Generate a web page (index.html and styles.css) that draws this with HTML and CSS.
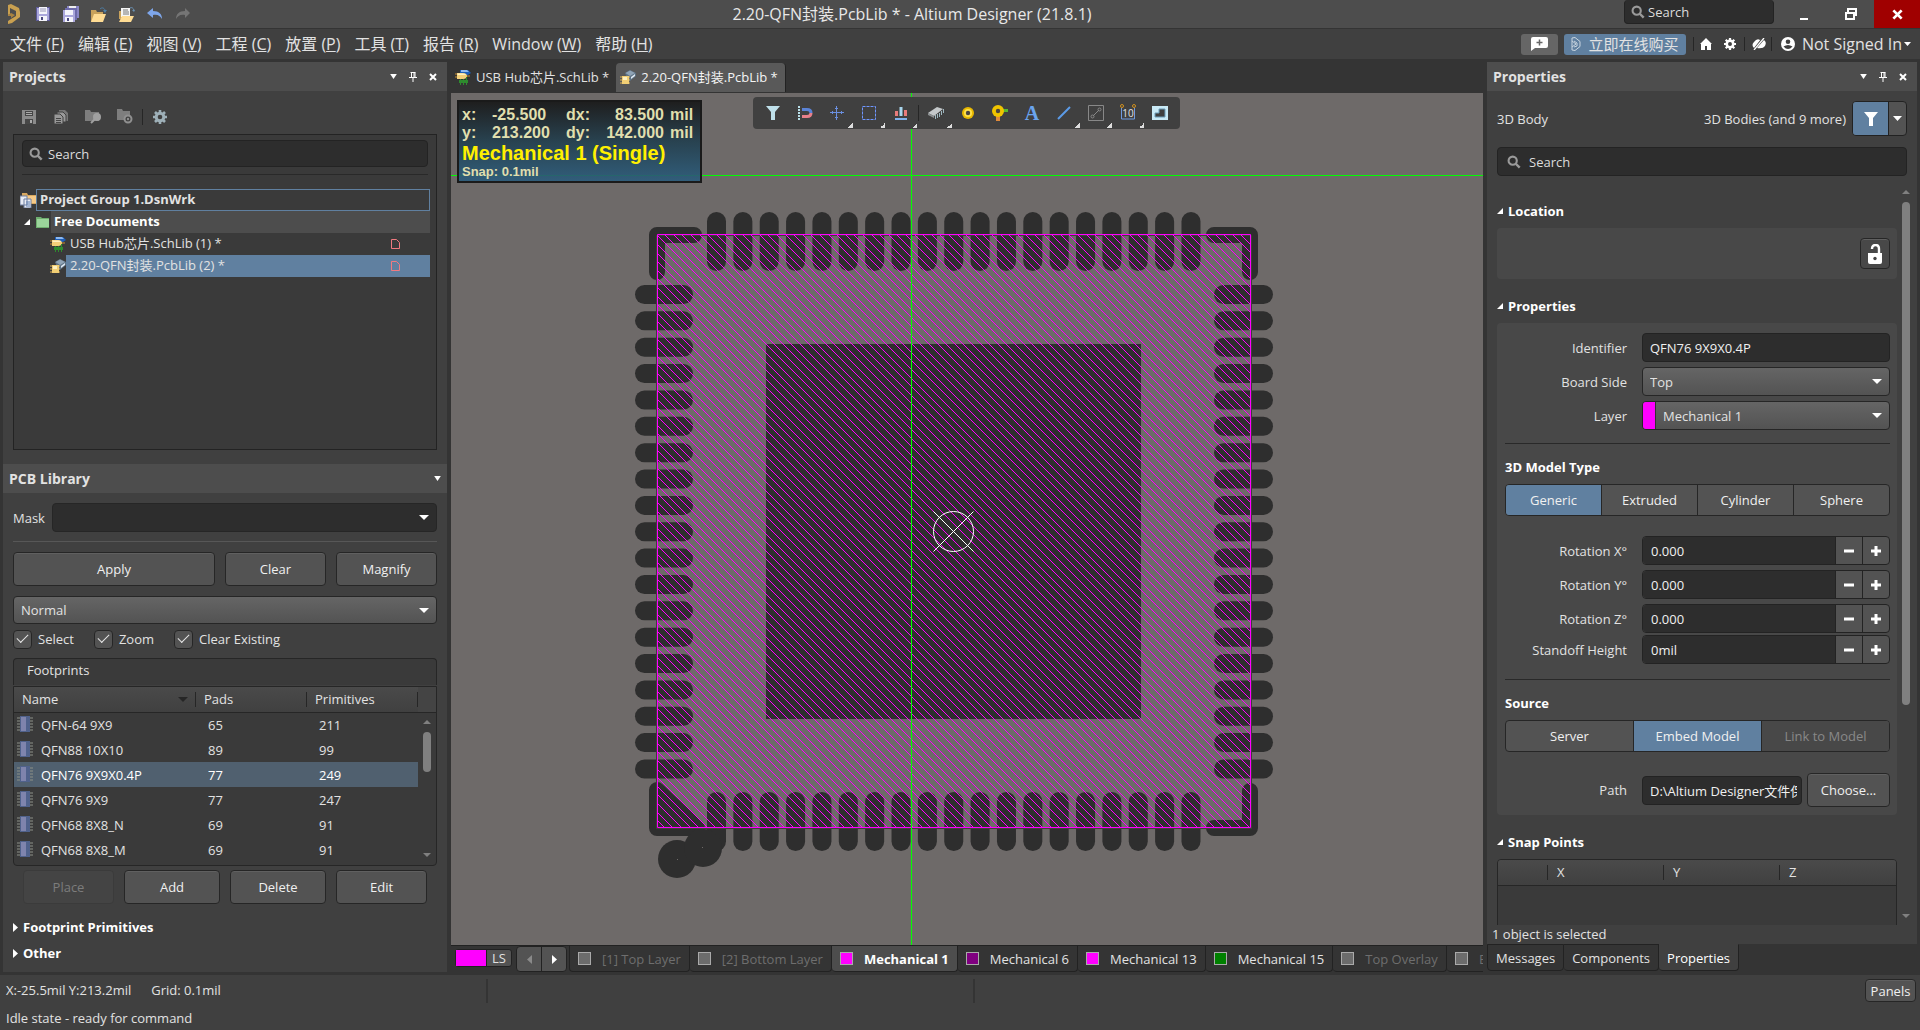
FILE: index.html
```html
<!DOCTYPE html>
<html lang="zh-CN">
<head>
<meta charset="utf-8">
<title>2.20-QFN封装.PcbLib * - Altium Designer (21.8.1)</title>
<link rel="stylesheet" href="styles.css">
</head>
<body>
<svg class="defs" aria-hidden="true">
  <symbol id="i-search" viewBox="0 0 16 16"><circle cx="6.5" cy="6.5" r="4.7" fill="none" stroke="#9a9a9a" stroke-width="2.4"/><path d="M10 10l4.5 4.5" stroke="#9a9a9a" stroke-width="2.8"/></symbol>
  <symbol id="i-down" viewBox="0 0 8 6"><path d="M0 0h8L4 6z" fill="#fff"/></symbol>
  <symbol id="i-pin" viewBox="0 0 8 10"><path d="M1.5.5h5M2.5.5v5M5 .5v5M6 .5v5M0 5.5h8M4 6v4" stroke="#fff" fill="none"/></symbol>
  <symbol id="i-close" viewBox="0 0 8 8"><path d="M1 1l6 6M7 1L1 7" stroke="#fff" stroke-width="2"/></symbol>
  <symbol id="i-sch" viewBox="0 0 16 16"><path d="M5 1h8l3 3-3 2H5z" fill="#1f5fb8"/><path d="M6 1h6l2 2H6z" fill="#8db8ee"/><path d="M0 5h3M0 8h3M11 7h4" stroke="#c98e2e"/><path d="M2 4h6c3 0 4 1.500 4 3s-1 3-4 3H2z" fill="#f3cf78"/><path d="M2.500 4.500H8c2 0 3 1 3 1.500H2.500z" fill="#fff0c0"/><path d="M4 11h9v3H4z" fill="#2e8b2e"/><path d="M5.500 10v6M8.500 10v6M11.500 8v8" stroke="#2e8b2e"/></symbol>
  <symbol id="i-pcb" viewBox="0 0 16 16"><path d="M5 4l5-3 6 3v3l-6 5-3-3z" fill="#5e7284"/><path d="M5.500 4L10 1.500 15 4l-5 3z" fill="#8fa3b5"/><path d="M11 8l4-3v2l-4 3z" fill="#dfe9f2"/><path d="M0 8h10M0 11h10M0 14h10" stroke="#e0b050"/><path d="M2 7h7v8H2z" fill="#f2cf74"/><path d="M3 8h4v3H3z" fill="#fff0bd"/></symbol>
  <symbol id="i-doc" viewBox="0 0 9 10"><path d="M.5.5h5l3 3v6h-8z" fill="none" stroke="#f07a80"/></symbol>
  <symbol id="i-chip" viewBox="0 0 16 16"><path d="M0 2h16M0 5h16M0 8h16M0 11h16M0 14h16" stroke="#8c9088"/><path d="M3 0h10v16H3z" fill="#50628c"/><path d="M4 1h5v14H4z" fill="#7f84ad"/></symbol>
  <symbol id="i-tri" viewBox="0 0 7 7"><path d="M7 0v7H0z" fill="#fff"/></symbol>
  <symbol id="i-right" viewBox="0 0 5 9"><path d="M0 0l5 4.500L0 9z" fill="#fff"/></symbol>
  <symbol id="i-minus" viewBox="0 0 10 10"><path d="M0 5h10" stroke="#fff" stroke-width="3"/></symbol>
  <symbol id="i-plus" viewBox="0 0 10 10"><path d="M0 5h10M5 0v10" stroke="#fff" stroke-width="3"/></symbol>
  <symbol id="i-gear" viewBox="0 0 14 14"><path d="M7 0v14M0 7h14M2 2l10 10M12 2L2 12" stroke="currentColor" stroke-width="2.600"/><circle cx="7" cy="7" r="3.800" fill="none" stroke="currentColor" stroke-width="3"/><circle cx="7" cy="7" r="2.300" fill="#404040"/></symbol>
</svg>

<header class="titlebar">
  <div class="quick">
    <svg class="logo" width="14" height="20" viewBox="0 0 14 20"><path d="M1 1l3-1 8 4 1 4v5l-8 6-4 1v-3l3-2 5-3V7L3 4v6l-2 1z" fill="#c9a050"/><path d="M4 9l4 2-4 3v-2H1v-1z" fill="#a98240"/></svg>
    <button aria-label="Save"><svg width="14" height="14" viewBox="0 0 14 14"><path d="M0 0h14v14H0z" fill="#5c5a96"/><path d="M1 1h12v12H1z" fill="#aaa7dc"/><path d="M3 0h8v7H3zM3 9h8v5H3z" fill="#f4f4fb"/><path d="M4 2h6M4 4h6" stroke="#9a98b8"/><path d="M5 10h2v3H5z" fill="#4a4880"/></svg></button>
    <button aria-label="Save all"><svg width="16" height="16" viewBox="0 0 16 16"><path d="M4 0h12v12H4z" fill="#8a87c4"/><path d="M6 0h7v5H6z" fill="#eee"/><path d="M2 2h12v12H2z" fill="#6e6bab"/><path d="M0 4h12v12H0z" fill="#aaa7dc"/><path d="M2 4h8v5H2zM2 11h8v5H2z" fill="#f4f4fb"/><path d="M4 12h2v3H4z" fill="#4a4880"/></svg></button>
    <button aria-label="Open"><svg width="16" height="15" viewBox="0 0 16 15"><path d="M0 3h5l1 2h6v3L9 15H0z" fill="#c9a25c"/><path d="M3 7h12l-3 8H0z" fill="#ffdc94"/><path d="M9 2c2-2 4-1 5 1" stroke="#4d7fa8" fill="none"/><path d="M12 3h4l-2 3z" fill="#4d7fa8"/></svg></button>
    <button aria-label="Open document"><svg width="16" height="15" viewBox="0 0 16 15"><path d="M0 4h4v8H0z" fill="#c9a25c"/><path d="M2 1h9v9H2z" fill="#f5f5f5"/><path d="M4 3h5M4 5h6M4 7h6" stroke="#777"/><path d="M3 9h12l-3 6H0z" fill="#ffdc94"/><path d="M11 1c2-1 3 0 4 2" stroke="#6b93b5" fill="none"/><path d="M13 3h3l-1 2z" fill="#6b93b5"/></svg></button>
    <button aria-label="Undo"><svg width="16" height="12" viewBox="0 0 16 12"><path d="M6 0v3c6 0 9 3 9 8-2-3-4-5-9-4v3L0 5z" fill="#7ea6ea"/></svg></button>
    <button aria-label="Redo"><svg width="16" height="12" viewBox="0 0 16 12"><path d="M10 0v3C4 3 1 6 1 11c2-3 4-5 9-4v3l5-5z" fill="#757575"/></svg></button>
  </div>
  <h1>2.20-QFN封装.PcbLib * - Altium Designer (21.8.1)</h1>
  <label class="field title-search"><svg width="14" height="14"><use href="#i-search"/></svg><input type="text" placeholder="Search" aria-label="Search commands"></label>
  <div class="winbtns">
    <button aria-label="Minimize"><svg width="10" height="12" viewBox="0 0 10 12"><path d="M1 10h8v2H1z" fill="#fff"/></svg></button>
    <button aria-label="Restore"><svg width="12" height="12" viewBox="0 0 12 12"><path d="M3 4V1h8v6H9M1 5h8v6H1z" fill="none" stroke="#fff" stroke-width="2"/></svg></button>
    <button class="close" aria-label="Close"><svg width="11" height="11"><use href="#i-close"/></svg></button>
  </div>
</header>

<nav class="menubar">
  <div class="menus">
    <button>文件 (<u>F</u>)</button><button>编辑 (<u>E</u>)</button><button>视图 (<u>V</u>)</button><button>工程 (<u>C</u>)</button><button>放置 (<u>P</u>)</button><button>工具 (<u>T</u>)</button><button>报告 (<u>R</u>)</button><button>Window (<u>W</u>)</button><button>帮助 (<u>H</u>)</button>
  </div>
  <div class="account">
    <button class="feedback" aria-label="Feedback"><svg width="17" height="14" viewBox="0 0 17 14"><path d="M2 0h13q2 0 2 2v7q0 2-2 2H4l-4 3V2q0-2 2-2z" fill="#fff"/><path d="M8.500 2.500v6M5.500 5.500h6" stroke="#666" stroke-width="1.500"/></svg></button>
    <button class="buy"><svg width="10" height="14" viewBox="0 0 10 14"><path d="M1 1l3-.5 5 4v5l-5 4-3-.5zM3 4l3 2v3l-3 1M1 4l4 3-4 3" fill="none" stroke="#c8d4df"/></svg>立即在线购买</button>
    <i class="vsep"></i>
    <button aria-label="Home"><svg width="12" height="12" viewBox="0 0 12 12"><path d="M6 0l6 6h-1v6H7V8H5v4H1V6H0z" fill="#fff"/></svg></button>
    <button class="white" aria-label="Settings"><svg width="12" height="12"><use href="#i-gear"/></svg></button>
    <i class="vsep wide"></i>
    <button aria-label="Server status"><svg width="14" height="12" viewBox="0 0 14 12"><path d="M2 10Q-1 7 2 4q3-4 6-2l1-1zM5 10l7-8q3 2 1 6-2 3-8 2z" fill="#fff"/><path d="M2 12L12 0" stroke="#fff" stroke-width="1.300"/></svg></button>
    <i class="vsep"></i>
    <button class="signin"><svg width="14" height="14" viewBox="0 0 14 14"><circle cx="7" cy="7" r="7" fill="#fff"/><circle cx="7" cy="4.800" r="2.300" fill="#404040"/><path d="M2.500 9.500q4.500-3 9 0-4.500 5-9 0z" fill="#404040"/></svg><span>Not Signed In</span><svg width="7" height="4" viewBox="0 0 8 6" preserveAspectRatio="none"><use href="#i-down"/></svg></button>
  </div>
</nav>

<main class="workspace">
  <aside class="side left">
    <section class="panel projects">
      <header class="phead"><h2>Projects</h2>
        <button aria-label="Panel menu"><svg width="7" height="5"><use href="#i-down"/></svg></button><button aria-label="Pin"><svg width="8" height="10"><use href="#i-pin"/></svg></button><button aria-label="Close panel"><svg width="8" height="8"><use href="#i-close"/></svg></button></header>
      <div class="ptools">
        <button aria-label="Save"><svg width="14" height="14" viewBox="0 0 14 14"><path d="M0 0h14v14H0z" fill="#8a8a8a"/><path d="M3 1h8v5H3zM3 9h8v5H3z" fill="#474747"/><path d="M4 2.500h6M4 4.500h6" stroke="#aaa"/><path d="M8 10h2v3H8z" fill="#aaa"/></svg></button>
        <button aria-label="Compile"><svg width="14" height="14" viewBox="0 0 14 14"><path d="M5 0h6l3 3v8H5z" fill="#777"/><path d="M3 2h6l3 3v7H3z" fill="#999" stroke="#404040"/><path d="M0 4h6l3 3v7H0z" fill="#999" stroke="#404040"/><path d="M2 8.500h5M2 10.500h5M2 12.500h5" stroke="#444"/></svg></button>
        <button aria-label="Explore"><svg width="17" height="14" viewBox="0 0 17 14"><path d="M0 0h5l1 2h8v9H0z" fill="#7e7e7e"/><circle cx="12" cy="7" r="4" fill="#a0a0a0"/><path d="M9.500 9.500L6 13" stroke="#a0a0a0" stroke-width="2"/></svg></button>
        <button aria-label="Options"><svg width="16" height="15" viewBox="0 0 16 15"><path d="M0 0h5l1 2h7v9H0z" fill="#7e7e7e"/><circle cx="11" cy="10" r="3.500" fill="#404040" stroke="#909090" stroke-width="2"/><circle cx="11" cy="10" r="1.200" fill="#909090"/></svg></button>
        <i class="vsep"></i>
        <button class="bluish" aria-label="Settings"><svg width="14" height="14"><use href="#i-gear"/></svg></button>
      </div>
      <div class="treebox">
        <label class="field"><svg width="14" height="14"><use href="#i-search"/></svg><input type="text" placeholder="Search" aria-label="Search projects"></label>
        <hr>
        <ul class="tree">
          <li class="lv0"><svg width="16" height="15" viewBox="0 0 16 15"><path d="M2 0h5l1 2h8v9H2z" fill="#d8a860"/><path d="M7 3h9v7H7z" fill="#f5c987"/><path d="M0 3h7v9H0zM4 6h7v9H4z" fill="#e8ecf4" stroke="#6f7fa0"/><path d="M6 9h4M6 11h4M6 13h4" stroke="#5f7fb0"/></svg><span>Project Group 1.DsnWrk</span></li>
          <li class="lv1"><svg width="6" height="6"><use href="#i-tri"/></svg><svg width="14" height="12" viewBox="0 0 14 12"><path d="M0 1h5l1 1h7v10H0z" fill="#6fae6f"/><path d="M1 3h12v8H1z" fill="#9bd49b"/></svg><span>Free Documents</span></li>
          <li class="lv2"><svg width="16" height="16"><use href="#i-sch"/></svg><span>USB Hub芯片.SchLib (1) *</span><svg width="9" height="10"><use href="#i-doc"/></svg></li>
          <li class="lv2 sel"><svg width="16" height="16"><use href="#i-pcb"/></svg><span>2.20-QFN封装.PcbLib (2) *</span><svg width="9" height="10"><use href="#i-doc"/></svg></li>
        </ul>
      </div>
    </section>
    <section class="panel library">
      <header class="phead"><h2>PCB Library</h2><button class="edge" aria-label="Panel menu"><svg width="7" height="5"><use href="#i-down"/></svg></button></header>
      <div class="pbody">
        <div class="mask"><label for="mask">Mask</label><span class="pick dark"><select id="mask"><option></option></select></span></div>
        <hr>
        <div class="btns three"><button class="btn">Apply</button><button class="btn">Clear</button><button class="btn">Magnify</button></div>
        <span class="pick normal"><select aria-label="Mode"><option>Normal</option></select></span>
        <div class="checks"><label><input type="checkbox" checked>Select</label><label><input type="checkbox" checked>Zoom</label><label><input type="checkbox" checked>Clear Existing</label></div>
        <h3 class="foot-title">Footprints</h3>
        <div class="foot">
          <table>
            <thead><tr><th class="sorted">Name</th><th>Pads</th><th>Primitives</th><th></th></tr></thead>
            <tbody>
              <tr><td><svg width="16" height="16"><use href="#i-chip"/></svg>QFN-64 9X9</td><td>65</td><td>211</td><td></td></tr>
              <tr><td><svg width="16" height="16"><use href="#i-chip"/></svg>QFN88 10X10</td><td>89</td><td>99</td><td></td></tr>
              <tr class="sel"><td><svg width="16" height="16"><use href="#i-chip"/></svg>QFN76 9X9X0.4P</td><td>77</td><td>249</td><td></td></tr>
              <tr><td><svg width="16" height="16"><use href="#i-chip"/></svg>QFN76 9X9</td><td>77</td><td>247</td><td></td></tr>
              <tr><td><svg width="16" height="16"><use href="#i-chip"/></svg>QFN68 8X8_N</td><td>69</td><td>91</td><td></td></tr>
              <tr><td><svg width="16" height="16"><use href="#i-chip"/></svg>QFN68 8X8_M</td><td>69</td><td>91</td><td></td></tr>
            </tbody>
          </table>
          <div class="scroll"><i class="thumb"></i></div>
        </div>
        <div class="btns four"><button class="btn" disabled>Place</button><button class="btn">Add</button><button class="btn">Delete</button><button class="btn">Edit</button></div>
        <button class="fold"><svg width="5" height="9"><use href="#i-right"/></svg>Footprint Primitives</button>
        <button class="fold"><svg width="5" height="9"><use href="#i-right"/></svg>Other</button>
      </div>
    </section>
  </aside>

  <section class="center">
    <div class="doctabs"><button><svg width="16" height="16"><use href="#i-sch"/></svg>USB Hub芯片.SchLib *</button><button class="on"><svg width="16" height="16"><use href="#i-pcb"/></svg>2.20-QFN封装.PcbLib *</button></div>
    <div class="canvas">
      <svg class="board" viewBox="451 93 1032 851">
        <defs><clipPath id="body-clip"><path d="M658 235h592v592H658z"/></clipPath></defs>
        <g id="pads" fill="#2e2e2e"></g>
        <path d="M766 344h375v375H766z" fill="#2e2e2e"/>
        <g fill="none" stroke="#2e2e2e" stroke-width="16" stroke-linecap="round" stroke-linejoin="round">
          <path d="M694 235H657V272M1214 235H1250V272M1250 791V828H1214"/>
          <path d="M657 790V828H697z" fill="#2e2e2e"/>
        </g>
        <circle cx="677" cy="859" r="19" fill="#2e2e2e"/><circle cx="703" cy="848" r="19" fill="#2e2e2e"/>
        <path d="M677 859h1v1h-1zM702 847h1v1h-1z" fill="#6e6a69"/>
        <path d="M656.500 235.500h595v593h-595z" fill="none" stroke="#403e3e"/>
        <path id="hatch" clip-path="url(#body-clip)" fill="none" stroke="#f0f" shape-rendering="crispEdges"/>
        <path d="M657.500 234.500h593v593h-593z" fill="none" stroke="#f0f"/>
        <path d="M911.500 93V1400M451 175.500H2600" stroke="#0f0"/>
        <g fill="none" stroke="#fff"><circle cx="953.500" cy="531.500" r="20"/><path d="M933.500 511.500l40 40M973.500 511.500l-40 40"/></g>
      </svg>
      <div class="hud">
        <div class="coords"><span>x:</span><span>-25.500</span><span>dx:</span><span class="r">83.500</span><span>mil</span><span>y:</span><span>213.200</span><span>dy:</span><span class="r">142.000</span><span>mil</span></div>
        <p class="layer">Mechanical 1 (Single)</p><p class="snap">Snap: 0.1mil</p>
      </div>
      <div class="active-bar">
        <button aria-label="Filter"><svg width="14" height="14" viewBox="0 0 14 14"><path d="M0 0h14L9 6v8H5V6z" fill="#bfe0ea"/></svg></button>
        <button aria-label="Snapping"><svg width="16" height="14" viewBox="0 0 16 14"><path d="M1 1h2M1 4h2M1 7h2M1 10h2M1 13h2" stroke="#b8dfe8" stroke-width="2"/><path d="M5 3.500h5q4 0 4 3.500" stroke="#5b83d6" stroke-width="3" fill="none"/><path d="M5 10.500h5q4 0 4-3.500" stroke="#e8808a" stroke-width="3" fill="none"/></svg></button>
        <button class="more" aria-label="Move"><svg width="14" height="14" viewBox="0 0 14 14"><path d="M6.500 0v14M0 6.500h14M5 2.500h3M5 11.500h3M2.500 5v3M11.500 5v3" stroke="#6a8fe0"/></svg></button>
        <button class="more" aria-label="Select area"><svg width="14" height="14" viewBox="0 0 14 14"><path d="M.5.500h13v13H.500z" fill="none" stroke="#6f96ff" stroke-dasharray="3 1"/></svg></button>
        <button class="more" aria-label="Align"><svg width="12" height="13" viewBox="0 0 12 13"><path d="M0 4h3v5H0zM9 3h3v6H9z" fill="#e87b7b"/><path d="M4.500 0h3v9h-3z" fill="#a9d6ee"/><path d="M0 11h12v2H0z" fill="#7fb2ee"/></svg></button>
        <i class="vsep"></i>
        <button class="more" aria-label="Component"><svg width="16" height="14" viewBox="0 0 16 14"><path d="M0 7l9-6 6 2-9 7z" fill="#c4c8ca"/><path d="M0 7l6 3v2L0 9z" fill="#8c9092"/><path d="M7.500 9v4M9.500 8v4M11.500 7v4M13.500 5v4M15.500 3v4" stroke="#9fb8c0"/></svg></button>
        <button aria-label="Pad"><svg width="12" height="12" viewBox="0 0 12 12"><circle cx="6" cy="6" r="6" fill="#e8b800"/><circle cx="6" cy="6" r="4" fill="#ffe14a"/><circle cx="6" cy="6" r="2.200" fill="#4a4440"/></svg></button>
        <button aria-label="Via"><svg width="16" height="16" viewBox="0 0 16 16"><path d="M9 5.500h7" stroke="#58b82e" stroke-width="3"/><path d="M6 9v7" stroke="#e08a3a" stroke-width="4"/><circle cx="6" cy="6" r="6" fill="#f0c400"/><circle cx="6" cy="6" r="2.200" fill="#4a4440"/></svg></button>
        <button class="string" aria-label="String">A</button>
        <button class="more" aria-label="Line"><svg width="14" height="14" viewBox="0 0 14 14"><path d="M1 13L13 1" stroke="#5b9be8" stroke-width="2"/></svg></button>
        <button class="more" aria-label="Dimension"><svg width="16" height="16" viewBox="0 0 16 16"><path d="M.5.500h15v15H.500z" fill="none" stroke="#888"/><path d="M5 11l6-6" stroke="#888"/><circle cx="4.500" cy="11.500" r="1.500" fill="none" stroke="#888"/><circle cx="11.500" cy="4.500" r="1.500" fill="none" stroke="#888"/></svg></button>
        <button class="more dim" aria-label="Size">10<svg width="16" height="16" viewBox="0 0 16 16"><path d="M1.500 4v11h13V4" fill="none" stroke="#6f9ae0"/><circle cx="2" cy="2" r="1.500" fill="none" stroke="#d09020"/><circle cx="14" cy="2" r="1.500" fill="none" stroke="#d09020"/></svg></button>
        <button aria-label="Region"><svg width="16" height="14" viewBox="0 0 16 14"><path d="M0 0h16v14H0z" fill="#c9eaf6"/><path d="M3 11V7h4V3h6v8z" fill="#404040" stroke="#6a9cb8"/></svg></button>
      </div>
    </div>
    <div class="layers">
      <button class="ls"><i></i>LS</button>
      <div class="nav"><button aria-label="Previous layers"><svg width="5" height="9" viewBox="0 0 5 9"><path d="M5 0v9L0 4.500z" fill="#8a8a8a"/></svg></button><button aria-label="Next layers"><svg width="5" height="9"><use href="#i-right"/></svg></button></div>
      <div class="tabs">
        <button class="off"><i></i>[1] Top Layer</button><button class="off"><i></i>[2] Bottom Layer</button><button class="on"><i class="mag"></i>Mechanical 1</button><button><i class="pur"></i>Mechanical 6</button><button><i class="mag"></i>Mechanical 13</button><button><i class="grn"></i>Mechanical 15</button><button class="off"><i></i>Top Overlay</button><button class="off"><i></i>Bottom Overlay</button>
      </div>
    </div>
  </section>

  <aside class="side right">
    <section class="panel props">
      <header class="phead"><h2>Properties</h2>
        <button aria-label="Panel menu"><svg width="7" height="5"><use href="#i-down"/></svg></button><button aria-label="Pin"><svg width="8" height="10"><use href="#i-pin"/></svg></button><button aria-label="Close panel"><svg width="8" height="8"><use href="#i-close"/></svg></button></header>
      <div class="objrow"><span>3D Body</span><span class="end">3D Bodies (and 9 more)</span><div class="filter"><button aria-label="Filter"><svg width="14" height="14" viewBox="0 0 14 14"><path d="M0 0h14L9 6v8H5V6z" fill="#fff"/></svg></button><button aria-label="Filter options"><svg width="9" height="5" viewBox="0 0 9 5"><path d="M0 0h9L4.500 5z" fill="#fff"/></svg></button></div></div>
      <label class="field psearch"><svg width="14" height="14"><use href="#i-search"/></svg><input type="text" placeholder="Search" aria-label="Search properties"></label>
      <div class="scroller">
        <div class="content">
          <h3 class="grp"><svg width="6" height="6"><use href="#i-tri"/></svg>Location</h3>
          <div class="card loc"><button class="btn" aria-label="Lock"><svg width="14" height="20" viewBox="0 0 14 20"><path d="M4 5q0-4 3.500-4T11 5v5" fill="none" stroke="#fff" stroke-width="2.400"/><path d="M0 9h14v9q0 2-2 2H2q-2 0-2-2z" fill="#fff"/><circle cx="7" cy="14.500" r="1.700" fill="#444"/></svg></button></div>
          <h3 class="grp"><svg width="6" height="6"><use href="#i-tri"/></svg>Properties</h3>
          <div class="card">
            <div class="form">
              <label for="ident">Identifier</label><input class="text" id="ident" type="text" value="QFN76 9X9X0.4P">
              <label for="bside">Board Side</label><span class="pick"><select id="bside"><option>Top</option></select></span>
              <label for="layer">Layer</label><span class="pick colored"><select id="layer"><option>Mechanical 1</option></select></span>
            </div>
            <hr>
            <h4>3D Model Type</h4>
            <div class="seg"><button class="on">Generic</button><button>Extruded</button><button>Cylinder</button><button>Sphere</button></div>
            <div class="form rot">
              <label for="rx">Rotation X°</label><span class="spin"><input id="rx" type="text" value="0.000"><button aria-label="Decrease X"><svg width="10" height="10"><use href="#i-minus"/></svg></button><button aria-label="Increase X"><svg width="10" height="10"><use href="#i-plus"/></svg></button></span>
              <label for="ry">Rotation Y°</label><span class="spin"><input id="ry" type="text" value="0.000"><button aria-label="Decrease Y"><svg width="10" height="10"><use href="#i-minus"/></svg></button><button aria-label="Increase Y"><svg width="10" height="10"><use href="#i-plus"/></svg></button></span>
              <label for="rz">Rotation Z°</label><span class="spin"><input id="rz" type="text" value="0.000"><button aria-label="Decrease Z"><svg width="10" height="10"><use href="#i-minus"/></svg></button><button aria-label="Increase Z"><svg width="10" height="10"><use href="#i-plus"/></svg></button></span>
            </div>
            <div class="form standoff">
              <label for="so">Standoff Height</label><span class="spin"><input id="so" type="text" value="0mil"><button aria-label="Decrease height"><svg width="10" height="10"><use href="#i-minus"/></svg></button><button aria-label="Increase height"><svg width="10" height="10"><use href="#i-plus"/></svg></button></span>
            </div>
            <hr>
            <h4>Source</h4>
            <div class="seg"><button>Server</button><button class="on">Embed Model</button><button disabled>Link to Model</button></div>
            <div class="form path"><label for="path">Path</label><div class="pathrow"><input class="text" id="path" type="text" value="D:\Altium Designer文件保存"><button class="btn">Choose...</button></div></div>
          </div>
          <h3 class="grp"><svg width="6" height="6"><use href="#i-tri"/></svg>Snap Points</h3>
          <div class="snapbox"><table><thead><tr><th></th><th>X</th><th>Y</th><th>Z</th></tr></thead></table></div>
        </div>
        <div class="scroll"><i class="thumb"></i></div>
      </div>
      <p class="count">1 object is selected</p>
    </section>
    <div class="ptabs"><button>Messages</button><button>Components</button><button class="on">Properties</button></div>
  </aside>
</main>

<footer class="status">
  <div class="cells"><div><span>X:-25.5mil Y:213.2mil</span><span>Grid: 0.1mil</span></div><div></div><div><button class="btn">Panels</button></div></div>
  <p>Idle state - ready for command</p>
</footer>
<script src="board.js"></script>
</body>
</html>
```
FILE: styles.css
```css
* { box-sizing: border-box; }
html, body { height: 100%; margin: 0; }
body {
  display: flex; flex-direction: column; overflow: hidden;
  background: #343434; color: #e2e2e2;
  font: 13px/20px "Open Sans", "Noto Sans CJK SC", sans-serif;
}
.defs { position: absolute; width: 0; height: 0; }
svg { display: block; flex: none; }
h1, h2, h3, h4, p, ul { margin: 0; padding: 0; font-size: inherit; font-weight: inherit; list-style: none; }
button, input, select { font: inherit; color: inherit; margin: 0; padding: 0; border: 0; background: none; border-radius: 0; min-width: 0; }
button { display: flex; align-items: center; justify-content: center; white-space: nowrap; }
input::placeholder { color: #dcdcdc; opacity: 1; }
hr { border: 0; height: 1px; background: #292929; margin: 0; }
table { border-collapse: collapse; table-layout: fixed; width: 100%; }
th, td { padding: 0; text-align: left; font-weight: 400; }
.vsep { width: 1px; height: 14px; background: #262626; }

.titlebar { display: flex; height: 29px; background: #4d4d4d; border-bottom: 1px solid #343434; }
.quick { display: flex; align-items: center; width: 200px; padding-left: 7px; }
.quick .logo { margin-right: 8px; }
.quick button { width: 28px; height: 28px; }
.titlebar h1 { flex: 1; text-align: center; font-size: 16px; line-height: 28px; white-space: nowrap; color: #e8e8e8; }
.field { display: flex; align-items: center; gap: 5px; height: 27px; padding: 0 6px; background: #2d2d2d; border: 1px solid #232323; border-radius: 4px; }
.field input { flex: 1; }
.title-search { width: 150px; height: 24px; gap: 3px; border-top: 0; }
.winbtns { display: flex; padding-left: 6px; }
.winbtns button { width: 47px; height: 28px; }
.winbtns .close { width: 46px; background: #a00000; }

.menubar { display: flex; justify-content: space-between; height: 30px; background: #404040; font-size: 15px; }
.menubar, .menus, .account { align-items: center; }
.menus { display: flex; gap: 14px; padding-left: 10px; font-size: 16px; }
.account { display: flex; padding-right: 9px; }
.feedback { width: 37px; height: 21px; border-radius: 3px; background: #666; margin-right: 6px; }
.buy { width: 122px; height: 21px; border-radius: 3px; background: #6080a0; gap: 7px; margin-right: 7px; }
.account > button:not(.feedback):not(.buy):not(.signin) { width: 24px; height: 24px; }
.account .wide { margin: 0 2px; }
.white { color: #fff; }
.bluish { color: #9eb0b8; }
.signin { gap: 7px; margin-left: 9px; font-size: 16px; }
.signin span + svg { margin-left: -5px; }

.workspace { flex: 1; min-height: 0; display: grid; grid-template-columns: 444px minmax(0, 1fr) 430px; gap: 4px; padding: 3px; }
.side, .center { display: flex; flex-direction: column; min-height: 0; }
.panel { background: #404040; display: flex; flex-direction: column; }
.phead { display: flex; align-items: center; height: 29px; padding: 0 4px 0 6px; background: #4d4d4d; flex: none; }
.phead h2 { flex: 1; font-size: 14px; font-weight: 700; }
.phead button { width: 20px; height: 20px; }
.phead .edge { width: 12px; }

.projects { flex: 1; min-height: 0; padding-bottom: 14px; }
.ptools { display: flex; align-items: center; height: 43px; padding: 8px 0 0 10px; flex: none; }
.ptools button { width: 32px; height: 24px; }
.ptools .vsep { margin: 0 1px; height: 16px; }
.treebox { flex: 1; min-height: 0; margin: 0 10px; padding: 5px 8px; background: #3a3a3a; border: 1px solid #232323; }
.treebox hr { margin-top: 7px; }
.tree { margin: 14px -2px 0; }
.tree li { display: flex; align-items: center; height: 22px; }
.tree span { line-height: 21px; height: 22px; padding-left: 3px; white-space: nowrap; }
.tree .lv0 span { flex: 1; line-height: 19px; border: 1px solid #6080a0; font-weight: 700; }
.tree .lv1 svg:first-child { margin: 0 6px 0 4px; }
.tree .lv1 span { flex: 1; margin-left: 1px; background: #4d4d4d; color: #fff; font-weight: 700; }
.tree .lv2 { padding-left: 30px; }
.tree .lv2 span { flex: 1; padding-left: 4px; }
.tree .lv2 svg:last-child { margin-right: 30px; }
.tree .sel { background: linear-gradient(#6080a0, #6080a0) right / calc(100% - 46px) 100% no-repeat; }

.pbody { padding: 10px 10px 6px; }
.mask { display: flex; align-items: center; gap: 7px; }
.pick { position: relative; display: flex; flex: 1; height: 29px; border: 1px solid #262626; border-radius: 4px; background: linear-gradient(#656565, #535353); overflow: hidden; }
.pick select { appearance: none; flex: 1; padding: 0 7px; outline: 0; }
.pick::after { content: ""; position: absolute; right: 7px; top: 11px; border: 5px solid transparent; border-top-color: #fff; border-bottom: 0; pointer-events: none; }
.pick.dark { background: #2d2d2d; }
.pick.normal { height: 28px; }
.pick.colored::before { content: ""; width: 12px; background: #f0f; border-right: 1px solid #333; }
.pbody > hr { margin: 9px 0 10px; background: #575757; }
.btn { height: 34px; border: 1px solid #262626; border-radius: 4px; background: #535353; box-shadow: inset 0 1px #606060; color: #f0f0f0; }
.btn:disabled { color: #7c7c7c; background: #444; border-color: #3b3b3b; box-shadow: none; }
.btns { display: grid; gap: 10px; }
.three { grid-template-columns: 2fr 1fr 1fr; margin-bottom: 10px; }
.four { grid-template-columns: 91fr 96fr 96fr 91fr; margin: 4px 10px 10px; }
.checks { display: flex; gap: 20px; margin: 5px 0 9px; }
.checks label { display: flex; align-items: center; gap: 6px; }
input[type="checkbox"] { appearance: none; width: 19px; height: 19px; border: 1px solid #262626; border-radius: 4px; background: #535353; display: grid; place-items: center; }
input[type="checkbox"]:checked::before { content: ""; width: 10px; height: 5px; border: solid #e6e6e6; border-width: 0 0 1px 1px; transform: translateY(-2px) rotate(-45deg); }
.foot-title { height: 27px; padding-left: 13px; line-height: 23px; background: #3a3a3a; border: 1px solid #262626; border-bottom: 0; border-radius: 4px 4px 0 0; }
.foot { display: flex; align-items: flex-start; position: relative; height: 180px; margin-top: 1px; border: 1px solid #262626; border-radius: 0 0 4px 4px; background: #3a3a3a; overflow: hidden; }
.foot th { height: 25px; padding-left: 8px; background: linear-gradient(#262626, #262626) right 5px / 1px 15px no-repeat, linear-gradient(#4a4a4a, #404040); border-bottom: 1px solid #262626; }
.foot th:last-child { background: #444; }
.foot th:nth-child(1) { width: 182px; }
.foot th:nth-child(2), .foot th:nth-child(3) { width: 111px; }
.foot .sorted::after { content: ""; float: right; margin: 8px 8px 0 0; border: 5px solid transparent; border-top-color: #262626; border-bottom: 0; }
.foot td { height: 25px; padding-left: 12px; white-space: nowrap; }
.foot td:first-child { padding-left: 3px; }
.foot td svg { float: left; margin: 1px 8px 0 0; }
.foot .sel td:not(:last-child) { background: #50606f; color: #fff; }
.scroll { position: relative; display: flex; flex-direction: column; align-items: center; }
.scroll::before, .scroll::after { content: ""; border: 4px solid transparent; }
.scroll::before { border-bottom-color: #808080; border-top: 0; }
.scroll::after { border-top-color: #808080; border-bottom: 0; margin-top: auto; }
.thumb { width: 8px; border-radius: 4px; background: #808080; }
.foot .scroll { position: absolute; right: 5px; top: 33px; bottom: 8px; }
.foot .thumb { height: 40px; margin-top: 8px; }
.fold { height: 26px; gap: 5px; width: 100%; justify-content: flex-start; font-weight: 700; color: #fff; }

.doctabs { display: flex; height: 31px; padding: 1px 0 1px 4px; }
.doctabs button { gap: 5px; padding: 0 7px 2px 0; border-radius: 4px 4px 0 0; }
.doctabs .on { background: #595959; padding-left: 4px; border-right: 1px solid #222; color: #f4f4f4; }
.canvas { position: relative; flex: 1; min-height: 0; background: #6e6a69; overflow: hidden; }
.board { width: 100%; height: auto; overflow: visible; }
.hud { position: absolute; left: 6px; top: 7px; width: 245px; height: 83px; padding: 4px 3px; border: 2px solid #1a1a1a; background: linear-gradient(#1b1b1bf4, #24404ff0 50%, #2b5c7ce8); color: #e0dfae; font: bold 16px/18px "Liberation Sans", sans-serif; white-space: nowrap; }
.coords { display: grid; grid-template-columns: 30px 74px 40px 64px 1fr; }
.coords .r { text-align: right; margin-right: 6px; }
.layer { font-size: 20px; line-height: 22px; color: #fff000; }
.snap { font-size: 13px; line-height: 16px; }
.active-bar { position: absolute; left: 302px; top: 4px; display: flex; align-items: center; height: 32px; padding: 0 4px; background: #404040; border-radius: 4px; }
.active-bar button { position: relative; width: 32px; height: 32px; }
.active-bar .vsep { margin: 0 1px; height: 16px; }
.active-bar .more::after { content: ""; position: absolute; right: 0; bottom: 1px; width: 5px; height: 5px; background: linear-gradient(135deg, transparent 50%, #ddd 50%); }
.string { font: bold 20px/20px "Liberation Serif", serif; color: #6aa4ee; }
.dim { font-size: 10px; }
.dim svg { position: absolute; left: 8px; top: 7px; }

.layers { display: flex; height: 27px; border-top: 1px solid #222; }
.ls { width: 57px; height: 18px; margin: 3px 4px 0; border: 1px solid #222; border-radius: 3px; background: #535353; gap: 5px; justify-content: flex-start; }
.ls i { width: 31px; height: 16px; background: #f0f; border-right: 1px solid #222; }
.nav { display: flex; width: 51px; margin: 0 2px 0 0; border: 1px solid #222; border-radius: 4px; background: #535353; }
.nav button { flex: 1; }
.nav button + button { border-left: 1px solid #222; }
.tabs { display: flex; flex: 1; min-width: 0; overflow: hidden; }
.tabs button { flex: none; gap: 11px; padding: 0 8px; border: solid #222; border-width: 0 1px 1px 0; border-radius: 0 0 4px 4px; }
.tabs button:first-child { border-left-width: 1px; }
.tabs i { width: 13px; height: 13px; border: 1px solid #aaa; background: #6c6c6c; }
.tabs .off { color: #6e6e6e; }
.tabs .on { background: #4d4d4d; font-weight: 700; color: #fff; }
.tabs .mag { background: #f0f; }
.tabs .pur { background: #800080; }
.tabs .grn { background: #008000; }

.props { flex: 1; min-height: 0; }
.objrow { display: flex; align-items: center; margin: 10px 10px 11px; }
.objrow .end { margin-left: auto; }
.filter { display: flex; width: 55px; height: 35px; margin-left: 6px; border: 1px solid #222; border-radius: 4px; background: #535353; overflow: hidden; }
.filter button:first-child { flex: 1; background: #6080a0; border-right: 1px solid #222; }
.filter button:last-child { width: 17px; }
.psearch { height: 29px; margin: 0 10px; padding: 0 9px; gap: 8px; flex: none; }
.scroller { flex: 1; min-height: 0; display: flex; margin-top: 9px; padding: 0 7px 0 10px; overflow: hidden; }
.scroller .content { flex: 1; min-width: 0; }
.scroller .scroll { width: 8px; margin: 5px 0 7px 5px; }
.scroller .thumb { height: 503px; margin-top: 8px; flex: none; }
.grp { display: flex; align-items: center; gap: 5px; margin: 17px 0 7px; font-weight: 700; color: #fff; }
.content .grp:first-child { margin-top: 16px; }
.card { padding: 10px 7px 8px 8px; border-radius: 4px; background: #484848; }
.card.loc { padding-bottom: 10px; }
.loc .btn { width: 30px; height: 31px; margin-left: auto; background: #484848; }
.form { display: grid; grid-template-columns: 122px minmax(0, 1fr); gap: 5px 15px; align-items: center; }
.form > label { text-align: right; }
.text { width: 100%; height: 29px; padding: 0 7px; background: #2d2d2d; border: 1px solid #232323; border-radius: 4px; color: #f0f0f0; outline: 0; }
.card hr { margin: 13px 0; }
h4 { font-weight: 700; color: #fff; margin-bottom: 7px; }
.seg { display: flex; height: 32px; border: 1px solid #262626; border-radius: 4px; background: #535353; overflow: hidden; color: #f0f0f0; }
.seg button { flex: 1 1 0; border-right: 1px solid #262626; }
.seg button:last-child { border-right: 0; }
.seg .on { background: #6080a0; }
.seg button:disabled { color: #888; background: #484848; }
.rot { margin-top: 20px; }
.standoff { margin-top: 2px; margin-bottom: 15px; }
.spin { display: flex; height: 29px; border: 1px solid #232323; border-radius: 4px; background: #535353; overflow: hidden; color: #f0f0f0; }
.spin input { flex: 1; padding: 0 8px; background: #2d2d2d; outline: 0; }
.spin button { width: 27px; border-left: 1px solid #232323; }
.path { margin-top: 21px; }
.pathrow { display: flex; align-items: center; gap: 5px; }
.pathrow .text { flex: 1; padding: 0 4px 0 7px; }
.pathrow .btn { width: 83px; }
.snapbox { height: 150px; border: 1px solid #262626; border-radius: 4px; background: #3a3a3a; overflow: hidden; }
.snapbox th { height: 25px; padding-left: 9px; background: linear-gradient(#262626, #262626) right 5px / 1px 15px no-repeat, linear-gradient(#4a4a4a, #404040); border-bottom: 1px solid #262626; }
.snapbox th:first-child { width: 50px; }
.snapbox th:last-child { background: linear-gradient(#4a4a4a, #404040); }
.count { height: 19px; line-height: 19px; padding-left: 5px; flex: none; }
.ptabs { display: flex; height: 27px; margin-bottom: 1px; }
.ptabs button { padding: 0 8px; border: 1px solid #222; border-left-width: 0; border-radius: 0 0 4px 4px; }
.ptabs button:first-child { border-left-width: 1px; }
.ptabs .on { background: #404040; border-top-color: #404040; color: #fff; }

.status { height: 55px; background: #404040; flex: none; }
.cells { display: grid; grid-template-columns: 488px 487px 1fr; height: 29px; padding-top: 4px; }
.cells > div { display: flex; gap: 20px; height: 24px; padding: 1px 4px 0 6px; border-right: 2px solid #343434; }
.cells > div:last-child { border: 0; justify-content: flex-end; padding-top: 0; }
.cells .btn { width: 51px; height: 23px; }
.status p { padding: 4px 0 0 6px; }
```
FILE: board.js
```javascript
// 19 rounded pads on each side of the QFN76 land pattern
const pads = document.getElementById('pads');
const pitch = 26.36;
function pad(x, y, w, h) {
  const r = document.createElementNS('http://www.w3.org/2000/svg', 'rect');
  Object.entries({ x, y, width: w, height: h, rx: 9.5 }).forEach(([k, v]) => r.setAttribute(k, v));
  pads.appendChild(r);
}
for (let i = 0; i < 19; i++) {
  const dx = 707 + i * pitch;
  const dy = 285 + i * pitch;
  pad(dx, 212, 19, 59);
  pad(dx, 792, 19, 59);
  pad(635, dy, 58, 19);
  pad(1214, dy, 59, 19);
}

// Diagonal fill of the 3D body, each line running through pixel centres
let d = '';
for (let c = -163.3 - 8.6 * 50; c < 1100; c += 8.6) {
  const x = Math.round(c + 234) + 0.5;
  d += `M${x} 234.5l594 594`;
}
document.getElementById('hatch').setAttribute('d', d);
```
